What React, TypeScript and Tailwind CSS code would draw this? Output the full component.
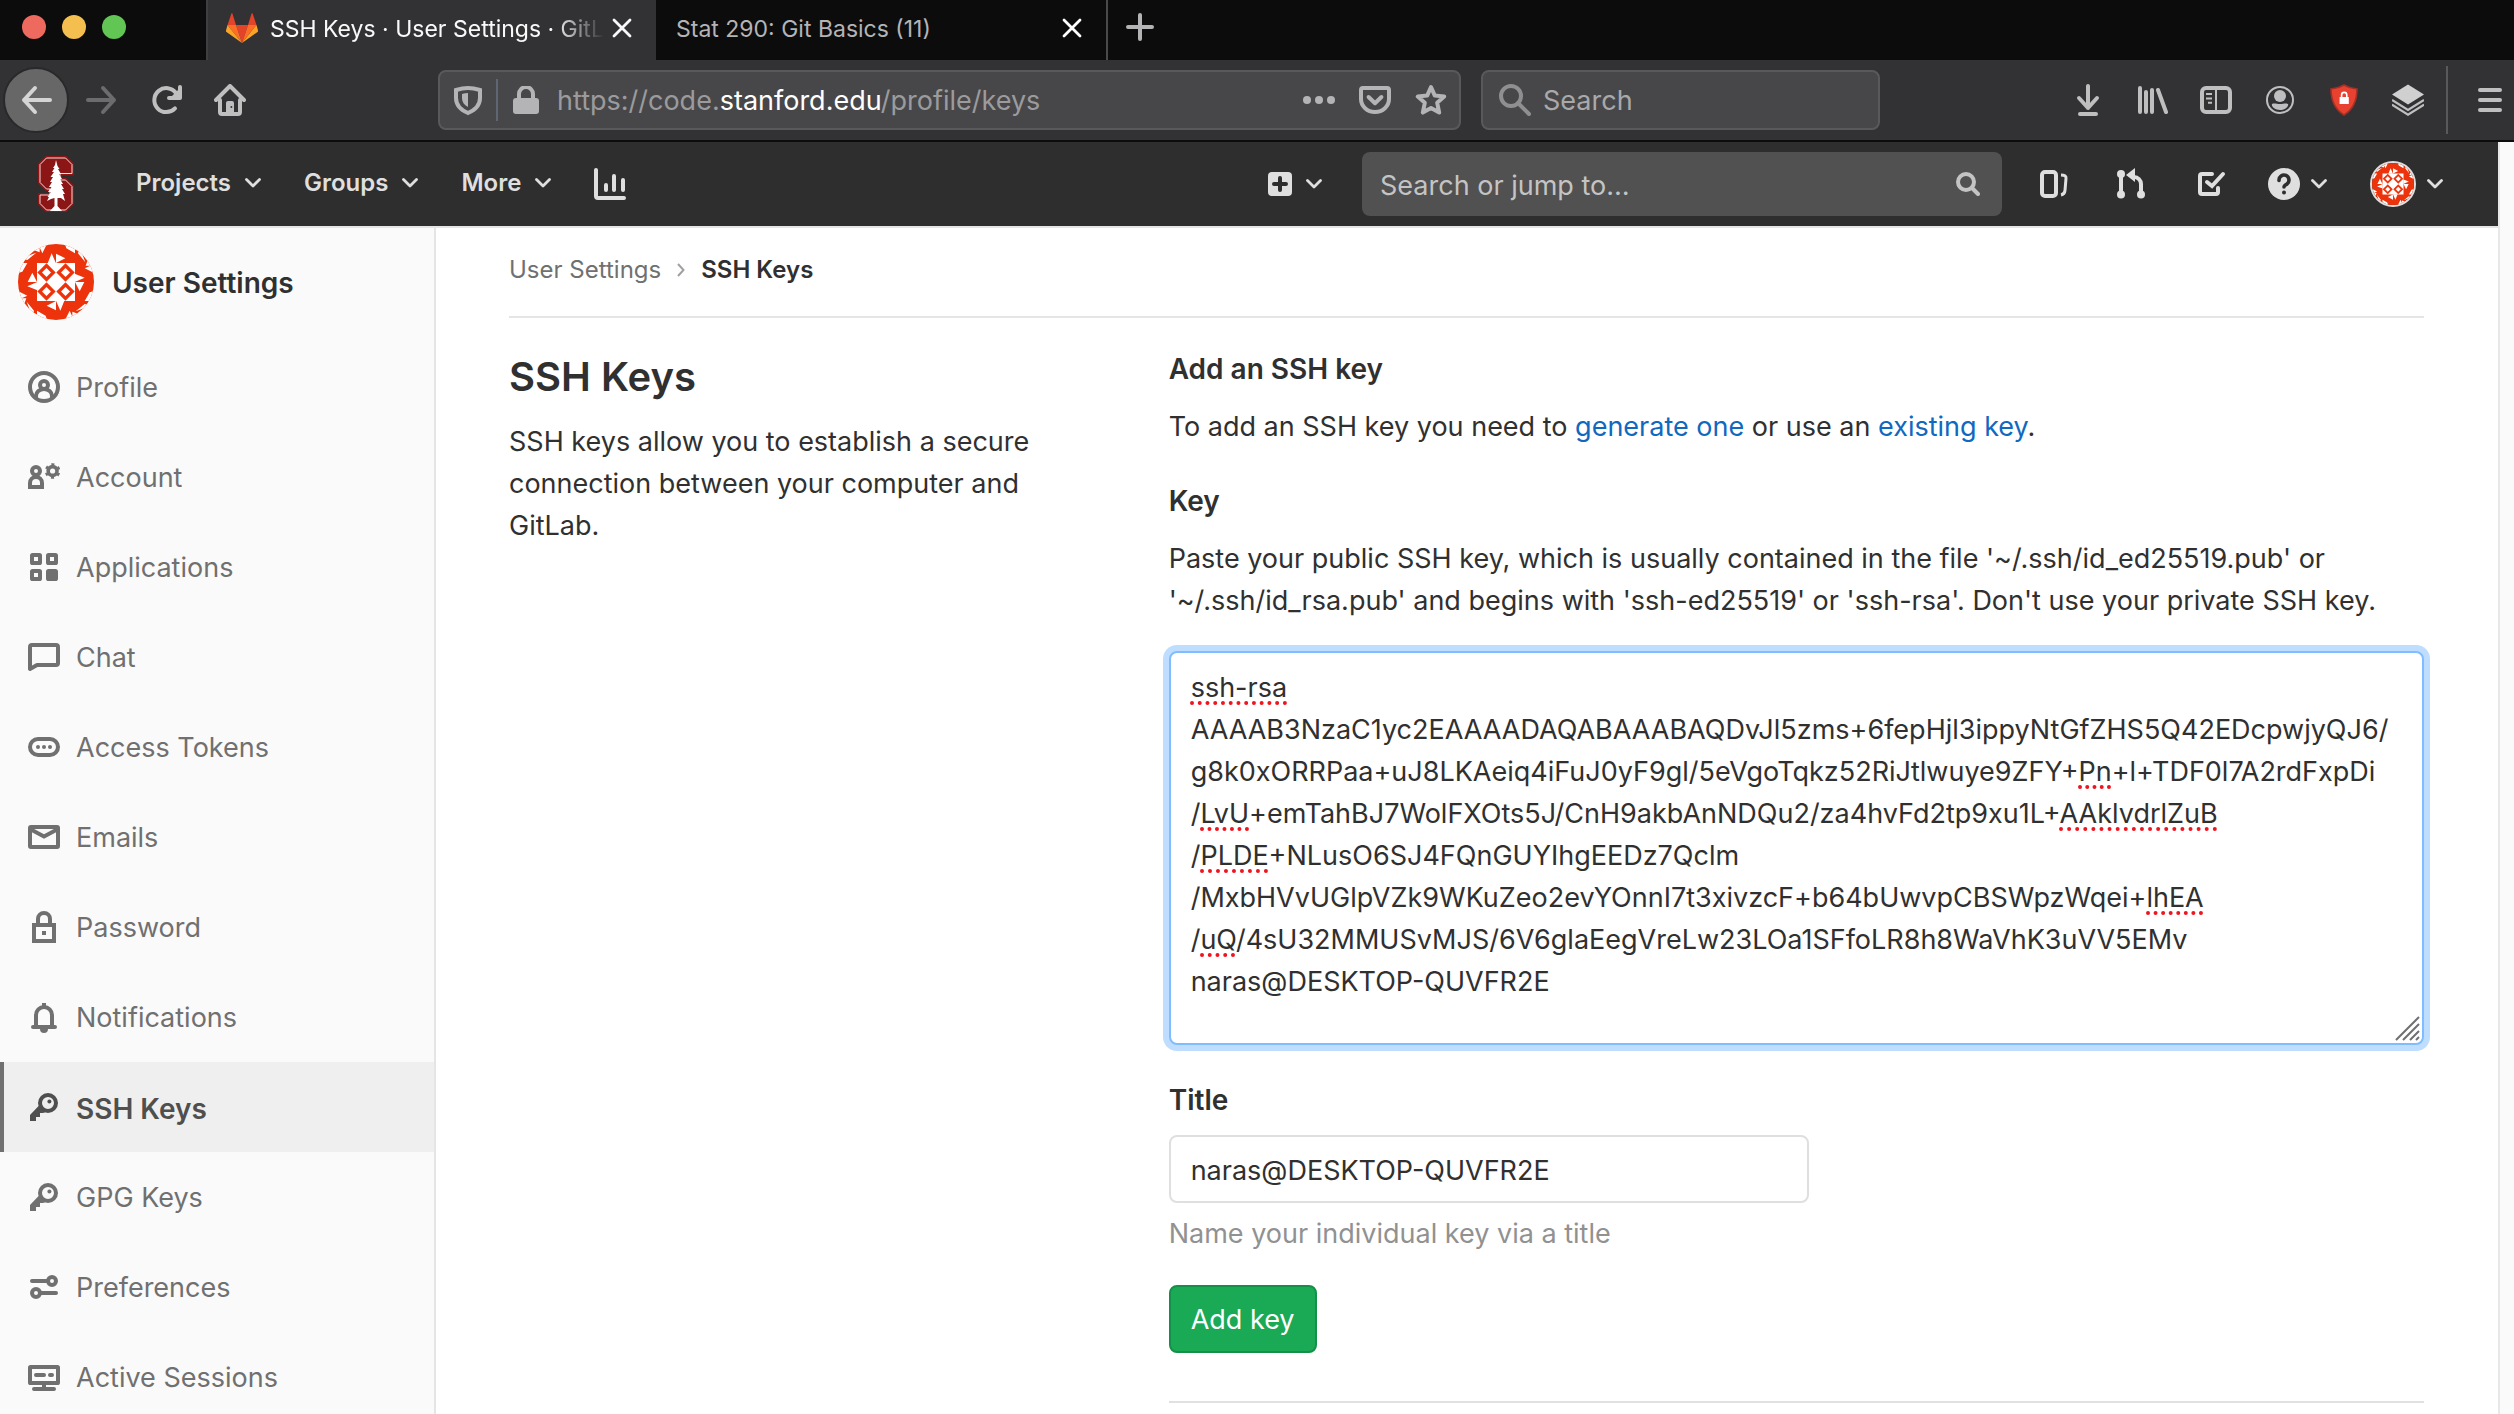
import type { ReactNode } from "react";

type IconProps = { className?: string; children: ReactNode; viewBox?: string };

function Icon({ className = "size-8", children, viewBox = "0 0 16 16" }: IconProps) {
  return (
    <svg viewBox={viewBox} className={`shrink-0 ${className}`} fill="none" stroke="currentColor" strokeWidth="2" aria-hidden="true">
      {children}
    </svg>
  );
}

function Chevron() {
  return (
    <Icon className="h-3 w-4" viewBox="0 0 16 12">
      <path d="M1.500 2.500 8 9l6.500-6.500" strokeWidth="2.800" strokeLinecap="round" strokeLinejoin="round" />
    </Icon>
  );
}

function Avatar({ className }: { className: string }) {
  const turns = [0, 90, 180, 270];
  const cells = [
    [57, 57],
    [114, 57],
    [57, 114],
    [114, 114],
  ];
  return (
    <svg viewBox="0 0 228 228" className={`shrink-0 rounded-full ${className}`} aria-hidden="true">
      <rect width="228" height="228" fill="#ed330b" />
      {turns.map((a) => (
        <g key={a} transform={`rotate(${a} 114 114)`} fill="#fff">
          <path d="M89 58l12-30 13 30zM114 29l28 14-28 14z" />
          <path d="M0 57h28l-15 26-13 4zM14 44l14-8 27-10-27 22zM46 18l19-8v15zM62 4h23l-12 24z" />
        </g>
      ))}
      {cells.map(([x, y]) => (
        <g key={`${x}-${y}`} transform={`translate(${x} ${y})`}>
          <rect width="57" height="57" fill="#fff" />
          <path d="M28.500 1L56 28.500 28.500 56 1 28.500z" fill="#ed330b" />
          <path d="M28.500 15L42 28.500 28.500 42 15 28.500z" fill="#fff" />
        </g>
      ))}
    </svg>
  );
}

function StanfordLogo() {
  return (
    <svg viewBox="0 0 36 56" className="h-14 w-9" aria-hidden="true">
      <path
        d="M8 1h20l7 7v10.500H23V23h5l7 7v18l-7 7H8l-7-7V38h12v-4H8l-7-7V8z"
        fill="#8c1515"
        stroke="#8c1515"
        strokeWidth="2"
      />
      <path
        d="M8.500 2h19l6.500 6.500v9H22V24h5.500l6.500 6.500v17L27.500 54h-19L2 47.500V39h10v-6H8.500L2 26.500v-18z"
        fill="#8c1515"
        stroke="#f3dede"
        strokeWidth="1"
      />
      <path
        d="M18 4L19.500 10L21.500 13L20 13L23 18L21 18L24 23L22 23L25 28L23 28L26 33L24 33L27 38L25 38L27 45L23 42L19.500 42V50L24 55H12L16.500 50V42L13 43L9 45L11 41L9.500 41L13 36L10 36L13.500 31L11 31L14 26L12 26L15 21L12.500 21L16 16L14 16L16.500 12L15 12L17 9Z"
        fill="#fff"
      />
    </svg>
  );
}

function Tanuki() {
  return (
    <svg viewBox="0 0 32 30" className="h-[30px] w-8 shrink-0" aria-hidden="true">
      <path d="M16 30l6-18H10z" fill="#e24329" />
      <path d="M16 30L10 12H1.500z" fill="#fc6d26" />
      <path d="M1.500 12L0 17.500c-.2.6 0 1.200.5 1.500L16 30z" fill="#fca326" />
      <path d="M1.500 12H10L6.500.7c-.2-.6-1-.6-1.200 0z" fill="#e24329" />
      <path d="M16 30l6-18h8.500z" fill="#fc6d26" />
      <path d="M30.500 12l1.500 5.500c.2.6 0 1.200-.5 1.500L16 30z" fill="#fca326" />
      <path d="M30.500 12H22L25.500.7c.2-.6 1-.6 1.200 0z" fill="#e24329" />
    </svg>
  );
}

function CloseIcon() {
  return (
    <Icon className="size-5" viewBox="0 0 20 20">
      <path d="M2 2l16 16M18 2L2 18" strokeWidth="2.800" strokeLinecap="round" />
    </Icon>
  );
}

const keyIcon = (
  <Icon>
    <circle cx="10" cy="6" r="4" />
    <circle cx="10.700" cy="5.300" r="1" fill="currentColor" stroke="none" />
    <path d="M5.300 7.500L1 12v3h3v-2h2v-2h1.500l1.500-.5z" fill="currentColor" stroke="none" />
  </Icon>
);

const sidebarItems: { label: string; icon: ReactNode; active?: boolean }[] = [
  {
    label: "Profile",
    icon: (
      <Icon>
        <circle cx="8" cy="8" r="7" />
        <circle cx="8" cy="7" r="2" />
        <path d="M4 14v-1.500a4 3.500 0 0 1 8 0V14" />
      </Icon>
    ),
  },
  {
    label: "Account",
    icon: (
      <Icon>
        <circle cx="4" cy="5" r="2" />
        <path d="M1 13v-2a3 3 0 0 1 6 0v2z" />
        <circle cx="12.300" cy="5" r="2.200" strokeWidth="1.800" />
        <circle cx="12.300" cy="5" r="3.300" strokeWidth="1.200" strokeDasharray="1.500 1.960" strokeDashoffset="-1" />
      </Icon>
    ),
  },
  {
    label: "Applications",
    icon: (
      <Icon>
        <rect x="2" y="2" width="4" height="4" rx=".3" />
        <rect x="10" y="2" width="4" height="4" rx=".3" />
        <rect x="2" y="10" width="4" height="4" rx=".3" />
        <rect x="10" y="10" width="4" height="4" rx=".3" fill="currentColor" />
      </Icon>
    ),
  },
  {
    label: "Chat",
    icon: (
      <Icon>
        <path d="M1 14V3a1 1 0 0 1 1-1h12a1 1 0 0 1 1 1v8a1 1 0 0 1-1 1H4.500z" strokeLinejoin="round" />
      </Icon>
    ),
  },
  {
    label: "Access Tokens",
    icon: (
      <Icon>
        <rect x="1" y="4" width="14" height="8" rx="4" />
        <g fill="currentColor" stroke="none">
          <circle cx="5" cy="8" r="1" />
          <circle cx="8" cy="8" r="1" />
          <circle cx="11" cy="8" r="1" />
        </g>
      </Icon>
    ),
  },
  {
    label: "Emails",
    icon: (
      <Icon>
        <rect x="1" y="3" width="14" height="10" rx=".5" />
        <path d="M1 4l7 3.700L15 4" />
      </Icon>
    ),
  },
  {
    label: "Password",
    icon: (
      <Icon>
        <path d="M5 7V4a3 3 0 0 1 6 0v3M3 7h10v8H3z" />
        <path d="M7 10h2v2H7z" fill="currentColor" stroke="none" />
      </Icon>
    ),
  },
  {
    label: "Notifications",
    icon: (
      <Icon>
        <path d="M4 12V7a4 4 0 0 1 8 0v5" />
        <path d="M2.500 13h11" strokeLinecap="round" />
        <path d="M7 1h2v2H7zM6 14h4a2 2 0 0 1-4 0z" fill="currentColor" stroke="none" />
      </Icon>
    ),
  },
  { label: "SSH Keys", icon: keyIcon, active: true },
  { label: "GPG Keys", icon: keyIcon },
  {
    label: "Preferences",
    icon: (
      <Icon>
        <circle cx="12" cy="5" r="2" />
        <circle cx="4" cy="11" r="2" />
        <path d="M2 5h8M6 11h8" strokeLinecap="round" />
      </Icon>
    ),
  },
  {
    label: "Active Sessions",
    icon: (
      <Icon>
        <rect x="1" y="3" width="14" height="8" rx=".3" />
        <path d="M4 7h4M11 7h1M3 14h10M8 12v2" strokeLinecap="round" />
      </Icon>
    ),
  },
];

const keyLines: { text: string; flagged?: boolean }[][] = [
  [{ text: "ssh-rsa", flagged: true }],
  [{ text: "AAAAB3NzaC1yc2EAAAADAQABAAABAQDvJl5zms+6fepHjl3ippyNtGfZHS5Q42EDcpwjyQJ6/" }],
  [
    { text: "g8k0xORRPaa+uJ8LKAeiq4iFuJ0yF9gl/5eVgoTqkz52RiJtlwuye9ZFY+" },
    { text: "Pn", flagged: true },
    { text: "+l+TDF0l7A2rdFxpDi" },
  ],
  [
    { text: "/" },
    { text: "LvU", flagged: true },
    { text: "+emTahBJ7WolFXOts5J/CnH9akbAnNDQu2/za4hvFd2tp9xu1L+" },
    { text: "AAklvdrlZuB", flagged: true },
  ],
  [{ text: "/" }, { text: "PLDE", flagged: true }, { text: "+NLusO6SJ4FQnGUYIhgEEDz7Qclm" }],
  [{ text: "/MxbHVvUGlpVZk9WKuZeo2evYOnnI7t3xivzcF+b64bUwvpCBSWpzWqei+" }, { text: "lhEA", flagged: true }],
  [
    { text: "/" },
    { text: "uQ", flagged: true },
    { text: "/4sU32MMUSvMJS/6V6glaEegVreLw23LOa1SFfoLR8h8WaVhK3uVV5EMv" },
  ],
  [{ text: "naras@DESKTOP-QUVFR2E" }],
];

const keyText = keyLines.map((line) => line.map((part) => part.text).join("")).join("\n");

function TabStrip() {
  return (
    <div className="flex h-[60px] shrink-0 bg-[#0c0c0d] text-[23px]">
      <div className="flex w-[206px] items-center gap-4 pb-[6px] pl-[22px]">
        <span className="size-6 rounded-full bg-[#ee6a5f]" />
        <span className="size-6 rounded-full bg-[#f5bf4f]" />
        <span className="size-6 rounded-full bg-[#62c654]" />
      </div>
      <div className="flex w-[450px] items-center border-l-2 border-[#3f3f41] bg-[#323234] pr-6 pb-1 pl-[18px] text-[#f9f9fa]">
        <Tanuki />
        <span className="ml-3 min-w-0 flex-1 overflow-hidden mask-r-from-85% mask-r-to-100% pt-[2px] whitespace-nowrap">
          SSH Keys · User Settings · GitLab
        </span>
        <button type="button" aria-label="Close tab" className="ml-2">
          <CloseIcon />
        </button>
      </div>
      <div className="flex w-[452px] items-center border-r-2 border-[#4a4a4c] pr-6 pb-1 pl-5 text-[#b4b4b6]">
        <span className="flex-1 pt-[2px]">Stat 290: Git Basics (11)</span>
        <button type="button" aria-label="Close tab" className="text-white">
          <CloseIcon />
        </button>
      </div>
      <button type="button" aria-label="New tab" className="ml-[18px] pb-[6px] text-[#b4b4b6]">
        <Icon className="size-7" viewBox="0 0 28 28">
          <path d="M14 2v24M2 14h24" strokeWidth="4" strokeLinecap="round" />
        </Icon>
      </button>
    </div>
  );
}

function BrowserToolbar() {
  return (
    <div className="flex h-[82px] shrink-0 items-center border-b-2 border-[#0c0c0d] bg-[#323234] pr-2 pl-[3px] text-[#bfbfc0]">
      <button
        type="button"
        aria-label="Back"
        className="flex size-[66px] shrink-0 items-center justify-center rounded-full border-2 border-[#29292b] bg-[#676768] text-[#d5d5d6]"
      >
        <Icon>
          <path d="M15 8H2M7.500 2L2 8l5.500 6" strokeLinecap="round" strokeLinejoin="round" />
        </Icon>
      </button>
      <button type="button" aria-label="Forward" className="ml-[17px] text-[#6c6c6e]">
        <Icon>
          <path d="M1 8h13M8.500 2L14 8l-5.500 6" strokeLinecap="round" strokeLinejoin="round" />
        </Icon>
      </button>
      <button type="button" aria-label="Reload" className="ml-8">
        <Icon>
          <path d="M12.500 12.200A6 6 0 1 1 13 4.500" strokeLinecap="round" />
          <path d="M15 1.500V7H9.500" strokeLinecap="round" strokeLinejoin="round" />
          <path d="M15 2v5h-5z" fill="currentColor" stroke="none" />
        </Icon>
      </button>
      <button type="button" aria-label="Home" className="ml-8">
        <Icon>
          <path d="M1 8l7-7 7 7M3 8v6a1 1 0 0 0 1 1h8a1 1 0 0 0 1-1V8" strokeLinecap="round" strokeLinejoin="round" />
          <path d="M6 15V9.500a1 1 0 0 1 1-1h2a1 1 0 0 1 1 1V15z" fill="currentColor" stroke="none" />
          <circle cx="8.700" cy="11.500" r=".5" fill="#323234" stroke="none" />
        </Icon>
      </button>

      <div className="ml-48 flex h-[60px] flex-1 items-center rounded-lg border-2 border-[#59595b] bg-[#474749] px-3 text-[#b4b4b6]">
        <Icon>
          <path d="M8 2c2 0 4 .4 6 1v4c0 3.500-2.500 6-6 7.500C4.500 13 2 10.500 2 7V3c2-.6 4-1 6-1z" />
          <path d="M8 4.500v7C6 10.500 5 9 5 7V5c1-.3 2-.5 3-.5z" fill="currentColor" stroke="none" />
        </Icon>
        <span className="ml-3 h-[42px] w-[2px] bg-[#5f6673]" />
        <Icon className="ml-[14px] size-7" viewBox="0 0 28 28">
          <rect x="1" y="12" width="26" height="16" rx="3" fill="currentColor" stroke="none" />
          <path d="M7 13V8a7 7 0 0 1 14 0v5" strokeWidth="4" />
        </Icon>
        <div className="ml-[17px] grid flex-1 items-center pt-[2px]">
          <input
            aria-label="Address"
            type="text"
            defaultValue="https://code.stanford.edu/profile/keys"
            className="col-start-1 row-start-1 w-full bg-transparent text-transparent caret-white outline-none"
          />
          <div aria-hidden="true" className="pointer-events-none col-start-1 row-start-1 text-[#9b9b9d]">
            https://code.<span className="text-white">stanford.edu</span>/profile/keys
          </div>
        </div>
        <button type="button" aria-label="Page actions">
          <Icon>
            <g fill="currentColor" stroke="none">
              <circle cx="2" cy="8" r="2" />
              <circle cx="8" cy="8" r="2" />
              <circle cx="14" cy="8" r="2" />
            </g>
          </Icon>
        </button>
        <button type="button" aria-label="Save to Pocket" className="ml-6">
          <Icon>
            <path d="M2 2h12a1 1 0 0 1 1 1v4.500a7 6.500 0 0 1-14 0V3a1 1 0 0 1 1-1z" />
            <path d="M4.800 6.500L8 9.600l3.200-3.100" strokeLinecap="round" strokeLinejoin="round" />
          </Icon>
        </button>
        <button type="button" aria-label="Bookmark this page" className="ml-6">
          <Icon>
            <path
              d="M8 1.500l1.900 4.300 4.700.500-3.500 3.100 1 4.900L8 12l-4.100 2.300 1-4.900L1.400 6.300l4.700-.5z"
              strokeLinejoin="round"
            />
          </Icon>
        </button>
      </div>

      <label className="ml-5 flex h-[60px] w-[399px] items-center rounded-lg border-2 border-[#59595b] bg-[#474749] pl-4 text-[#8f8f91]">
        <Icon>
          <circle cx="6" cy="6" r="5" />
          <path d="M9.500 9.500L15 15" strokeLinecap="round" />
        </Icon>
        <input
          type="text"
          aria-label="Search the web"
          placeholder="Search"
          className="ml-3 w-full min-w-0 bg-transparent pt-[2px] outline-none placeholder:text-[#a9a9ab]"
        />
      </label>

      <div className="ml-48 flex items-center gap-8">
        <button type="button" aria-label="Downloads">
          <Icon>
            <path d="M8 1v11M3.500 7L8 12l4.500-5M4 15h8" strokeLinecap="round" strokeLinejoin="round" />
          </Icon>
        </button>
        <button type="button" aria-label="Library">
          <Icon>
            <path d="M2 2v12M5 4v10M8 3v11M11 3l4 11" strokeLinecap="round" />
          </Icon>
        </button>
        <button type="button" aria-label="Sidebars">
          <Icon>
            <rect x="1" y="2" width="14" height="12" rx="2" />
            <path d="M8 2v12M3 5h3M3 7.200h3M4 9.400h2" strokeWidth="1" />
          </Icon>
        </button>
        <button type="button" aria-label="Account">
          <Icon>
            <circle cx="8" cy="8" r="6.500" strokeWidth="1" />
            <ellipse cx="8" cy="6" rx="3" ry="3" fill="currentColor" stroke="none" />
            <path d="M4 10c1.200-.6 2.200 0 4 0s2.800-.6 4 0c.5 1.200-1.500 3-4 3s-4.500-1.800-4-3z" fill="currentColor" stroke="none" />
          </Icon>
        </button>
        <button type="button" aria-label="Privacy shield">
          <Icon>
            <path d="M8 .5c2 1.200 4.500 1.800 6.500 2 0 6-2.500 10.500-6.500 13C4 13 1.500 8.500 1.500 2.500c2-.2 4.500-.8 6.500-2z" fill="#e8412f" stroke="#a53026" strokeWidth=".8" />
            <path d="M5.800 6.500h4.600v3.500H5.800z" fill="#fff" stroke="none" />
            <path d="M6.800 7V5.500a1.300 1.300 0 0 1 2.600 0V7" stroke="#fff" strokeWidth=".8" />
          </Icon>
        </button>
        <button type="button" aria-label="Containers">
          <Icon>
            <path d="M8 .3l8 5-8 5-8-5z" fill="#d0d0d1" stroke="none" />
            <path d="M0 8l8 5 8-5M0 10.300l8 5 8-5" strokeWidth="1.100" />
          </Icon>
        </button>
      </div>
      <span className="ml-[22px] h-[68px] w-[2px] bg-[#59595b]" />
      <button type="button" aria-label="Open menu" className="ml-[26px]">
        <Icon>
          <path d="M3 3h10M3 8h10M3 13h10" strokeLinecap="round" />
        </Icon>
      </button>
    </div>
  );
}

function NavBar() {
  return (
    <header className="flex h-[86px] shrink-0 items-center border-b-2 border-[#e5e5e5] bg-[#2e2e2e] bg-clip-padding pr-[55px] pl-[38px] text-[#dfdfdf]">
      <a href="#home" aria-label="Home">
        <StanfordLogo />
      </a>
      <nav className="ml-[62px] flex items-center gap-[43px] text-[24px] font-semibold">
        {["Projects", "Groups", "More"].map((label) => (
          <button key={label} type="button" className="flex items-center gap-[14px] pb-[3px]">
            {label}
            <Chevron />
          </button>
        ))}
        <a href="#analytics" aria-label="Analytics">
          <Icon>
            <path d="M1 1v13a1 1 0 0 0 1 1h13M6 8.500V11M10 4v7M14.500 6v5" strokeLinecap="round" />
          </Icon>
        </a>
      </nav>
      <div className="ml-auto flex items-center">
        <button type="button" aria-label="New" className="flex items-center gap-[14px]">
          <Icon className="size-6" viewBox="0 0 12 12">
            <rect width="12" height="12" rx="2" fill="currentColor" stroke="none" />
            <path d="M6 3v6M3 6h6" stroke="#2e2e2e" strokeLinecap="round" />
          </Icon>
          <Chevron />
        </button>
        <label className="ml-10 flex h-16 w-[640px] items-center rounded-lg bg-[#515151] pr-[22px] pl-[18px]">
          <input
            type="text"
            aria-label="Search or jump to"
            placeholder="Search or jump to…"
            className="w-full min-w-0 bg-transparent pt-1 outline-none placeholder:text-[#c4c4c4]"
          />
          <Icon className="size-6 text-[#c4c4c4]" viewBox="0 0 12 12">
            <circle cx="5" cy="5" r="4" />
            <path d="M8 8l3 3" strokeLinecap="round" />
          </Icon>
        </label>
        <a href="#issues" aria-label="Issues" className="ml-9">
          <Icon>
            <rect x="2" y="2" width="7" height="12" rx="1.500" />
            <path d="M11.500 3.500c1.700 0 2.700.5 2.500 1.700l-.5 6c-.1 1.300-.6 2-2 2.300" strokeWidth="1.500" />
          </Icon>
        </a>
        <a href="#merge-requests" aria-label="Merge requests" className="ml-[45px]">
          <Icon>
            <path d="M3 3v10M13 13V8a3.500 3.500 0 0 0-3.500-3.500H9" />
            <g fill="currentColor" stroke="none">
              <circle cx="3" cy="3" r="2" />
              <circle cx="3" cy="13.200" r="2" />
              <circle cx="13" cy="13.200" r="2" />
              <path d="M5.500 3.500L10 0v7z" />
            </g>
          </Icon>
        </a>
        <a href="#todos" aria-label="To-Do List" className="ml-[49px]">
          <Icon>
            <path d="M8 3H3a1 1 0 0 0-1 1v8a1 1 0 0 0 1 1h7a1 1 0 0 0 1-1v-2" strokeLinecap="round" />
            <path d="M5.500 7L8 9l5.500-6" strokeLinecap="round" />
          </Icon>
        </a>
        <button type="button" aria-label="Help" className="ml-10 flex items-center gap-[11px]">
          <Icon>
            <circle cx="8" cy="8" r="8" fill="currentColor" stroke="none" />
            <path d="M5.500 6.200A2.500 2.500 0 1 1 9.500 8C8.500 8.700 8 8.800 8 9.500" stroke="#2e2e2e" strokeLinecap="round" strokeWidth="1.800" />
            <circle cx="8" cy="12.200" r="1" fill="#2e2e2e" stroke="none" />
          </Icon>
          <Chevron />
        </button>
        <button type="button" aria-label="Account menu" className="ml-[43px] flex items-center gap-[11px]">
          <Avatar className="size-[46px] border-2 border-[#dfdfdf]" />
          <Chevron />
        </button>
      </div>
    </header>
  );
}

function Sidebar() {
  return (
    <aside className="w-[436px] shrink-0 overflow-hidden border-r-2 border-[#e5e5e5] bg-[#fafafa]">
      <a href="#settings" className="flex h-[114px] items-center gap-[18px] pb-[6px] pl-[18px] text-[28px] font-semibold text-[#303030]">
        <Avatar className="size-[76px]" />
        <span className="pt-[2px]">User Settings</span>
      </a>
      <ul>
        {sidebarItems.map(({ label, icon, active }) => (
          <li key={label}>
            <a
              href="#section"
              aria-current={active ? "page" : undefined}
              className={
                active
                  ? "flex h-[90px] items-center gap-4 border-l-4 border-[#707070] bg-[#efefef] pl-6 text-[28px] font-semibold text-[#4f4f4f]"
                  : "flex h-[90px] items-center gap-4 pl-7 text-[#707070]"
              }
            >
              {icon}
              <span className="pt-[3px]">{label}</span>
            </a>
          </li>
        ))}
      </ul>
    </aside>
  );
}

function KeyField() {
  return (
    <div className="mt-[29px] grid">
      <textarea
        id="key"
        spellCheck={false}
        defaultValue={keyText}
        className="col-start-1 row-start-1 block h-[394px] resize-none overflow-hidden rounded-lg border-2 border-[#80bdff] bg-white px-5 py-[14px] leading-[42px] whitespace-pre-wrap ring-[6px] ring-[#bfdeff] outline-none"
      />
      <div
        aria-hidden="true"
        className="pointer-events-none relative col-start-1 row-start-1 border-2 border-transparent px-5 py-[14px] leading-[42px] whitespace-pre-wrap text-transparent"
      >
        {keyLines.map((line, i) => (
          <div key={i}>
            {line.map((part) => (
              <span
                key={part.text}
                className={part.flagged ? "underline decoration-[#f0141e] decoration-dotted decoration-4 underline-offset-4 [text-decoration-skip-ink:none]" : ""}
              >
                {part.text}
              </span>
            ))}
          </div>
        ))}
        <Icon className="absolute right-0 bottom-0 size-7 text-[#6f6f6f]" viewBox="0 0 28 28">
          <path d="M2 25L25 2M9 25l16-16M16 25l9-9M22 25l3-3" />
        </Icon>
      </div>
    </div>
  );
}

function Content() {
  return (
    <main className="min-w-0 flex-1 bg-white pr-[74px] pl-[73px] text-[#303030]">
      <nav aria-label="Breadcrumb" className="flex h-[90px] items-center border-b-2 border-[#e5e5e5] pb-1 text-[24px]">
        <a href="#settings" className="text-[#707070]">
          User Settings
        </a>
        <Icon className="mx-4 h-4 w-2 text-[#a0a0a0]" viewBox="0 0 8 16">
          <path d="M1 2l5.500 6L1 14" />
        </Icon>
        <span className="font-semibold">SSH Keys</span>
      </nav>
      <div className="grid grid-cols-[1fr_2fr] gap-8">
        <section className="pt-[33px]">
          <h1 className="text-[40px] leading-[52px] font-semibold">SSH Keys</h1>
          <p className="mt-[18px] pr-16 leading-[42px]">
            SSH keys allow you to establish a secure connection between your computer and GitLab.
          </p>
        </section>
        <form className="pt-[30px] leading-[42px]">
          <h2 className="text-[28px] font-semibold">Add an SSH key</h2>
          <p className="mt-4">
            To add an SSH key you need to{" "}
            <a href="#generate" className="text-[#1068bf]">
              generate one
            </a>{" "}
            or use an{" "}
            <a href="#existing" className="text-[#1068bf]">
              existing key
            </a>
            .
          </p>
          <label htmlFor="key" className="mt-8 block text-[28px] font-semibold">
            Key
          </label>
          <p className="mt-4">
            Paste your public SSH key, which is usually contained in the file '~/.ssh/id_ed25519.pub' or '~/.ssh/id_rsa.pub' and
            begins with 'ssh-ed25519' or 'ssh-rsa'. Don't use your private SSH key.
          </p>
          <KeyField />
          <label htmlFor="title" className="mt-[34px] block text-[28px] font-semibold">
            Title
          </label>
          <input
            id="title"
            type="text"
            defaultValue="naras@DESKTOP-QUVFR2E"
            className="mt-[14px] block h-[68px] w-[640px] rounded-lg border-2 border-[#dfdfdf] px-5 pt-[2px] outline-none"
          />
          <p className="mt-[10px] text-[#919191]">Name your individual key via a title</p>
          <button
            type="button"
            className="mt-[30px] block h-[68px] rounded-lg border-2 border-[#168f48] bg-[#1aaa55] px-5 pt-[2px] text-white"
          >
            Add key
          </button>
          <hr className="mt-12 border-t-2 border-[#e1e1e1]" />
        </form>
      </div>
    </main>
  );
}

export default function App() {
  return (
    <div className="flex h-screen flex-col overflow-hidden bg-white font-['Inter',sans-serif] text-[27px]">
      <TabStrip />
      <BrowserToolbar />
      <div className="flex min-h-0 flex-1">
        <div className="flex min-w-0 flex-1 flex-col">
          <NavBar />
          <div className="flex min-h-0 flex-1">
            <Sidebar />
            <Content />
          </div>
        </div>
        <div className="w-4 shrink-0 border-l-2 border-[#e8e8e8] bg-[#fafafa]" />
      </div>
    </div>
  );
}
